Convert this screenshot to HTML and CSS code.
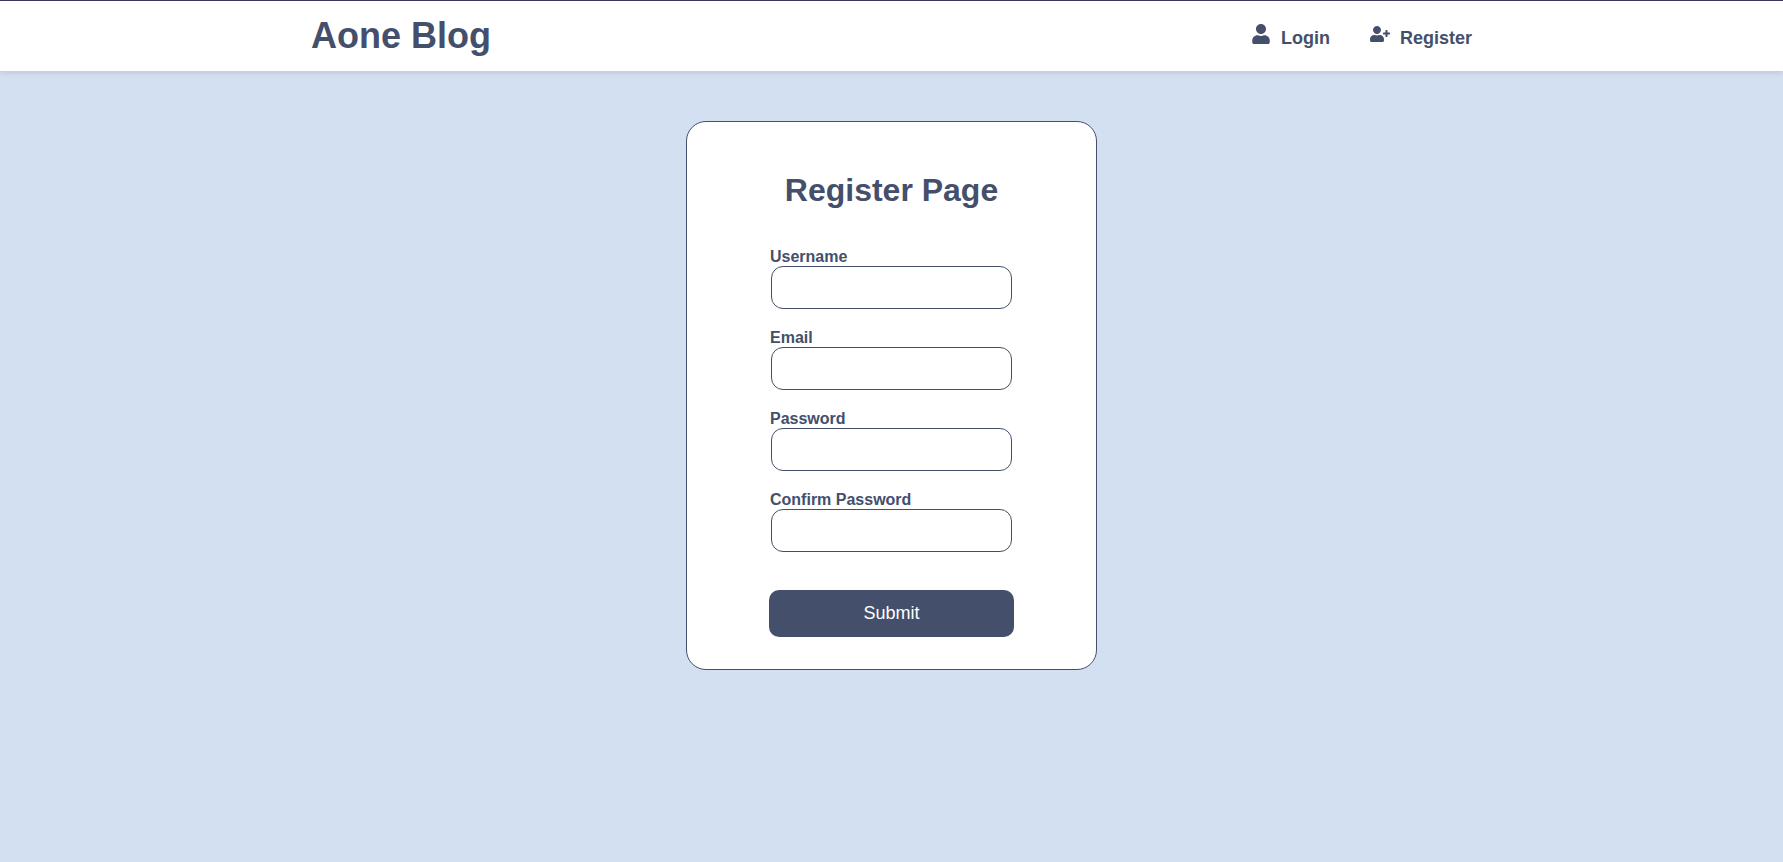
FILE: index.html
```html
<!DOCTYPE html>
<html lang="en">
<head>
  <meta charset="utf-8">
  <meta name="viewport" content="width=device-width, initial-scale=1">
  <title>Aone Blog</title>
  <link rel="stylesheet" href="styles.css">
</head>
<body>
  <header class="header">
    <div class="header-inner">
      <a class="logo" href="#">Aone Blog</a>
      <nav class="nav">
        <a class="nav-link" href="#">
          <svg class="nav-icon" viewBox="0 0 448 512" aria-hidden="true"><path fill="currentColor" d="M224 256c70.7 0 128-57.3 128-128S294.7 0 224 0 96 57.3 96 128s57.3 128 128 128zm89.6 32h-16.7c-22.2 10.2-46.9 16-72.9 16s-50.6-5.8-72.9-16h-16.7C60.2 288 0 348.2 0 422.4V464c0 26.5 21.5 48 48 48h352c26.5 0 48-21.5 48-48v-41.6c0-74.2-60.2-134.4-134.4-134.4z"/></svg>
          <span>Login</span>
        </a>
        <a class="nav-link" href="#">
          <svg class="nav-icon" viewBox="0 0 640 512" aria-hidden="true"><path fill="currentColor" d="M624 208h-64v-64c0-8.8-7.2-16-16-16h-32c-8.8 0-16 7.2-16 16v64h-64c-8.8 0-16 7.2-16 16v32c0 8.8 7.2 16 16 16h64v64c0 8.8 7.2 16 16 16h32c8.8 0 16-7.2 16-16v-64h64c8.8 0 16-7.2 16-16v-32c0-8.8-7.2-16-16-16zm-400 48c70.7 0 128-57.3 128-128S294.7 0 224 0 96 57.3 96 128s57.3 128 128 128zm89.6 32h-16.7c-22.2 10.2-46.9 16-72.9 16s-50.6-5.8-72.9-16h-16.7C60.2 288 0 348.2 0 422.4V464c0 26.5 21.5 48 48 48h352c26.5 0 48-21.5 48-48v-41.6c0-74.2-60.2-134.4-134.4-134.4z"/></svg>
          <span>Register</span>
        </a>
      </nav>
    </div>
  </header>
  <main class="main">
    <form class="card">
      <h1 class="card-title">Register Page</h1>
      <div class="fields">
        <div class="field">
          <label class="label" for="username">Username</label>
          <input class="input" id="username" name="username" type="text">
        </div>
        <div class="field">
          <label class="label" for="email">Email</label>
          <input class="input" id="email" name="email" type="email">
        </div>
        <div class="field">
          <label class="label" for="password">Password</label>
          <input class="input" id="password" name="password" type="password">
        </div>
        <div class="field">
          <label class="label" for="confirm">Confirm Password</label>
          <input class="input" id="confirm" name="confirm" type="password">
        </div>
      </div>
      <button class="submit" type="submit">Submit</button>
    </form>
  </main>
</body>
</html>
```
FILE: styles.css
```css
:root {
  --ink: #444f6b;
  --page: #d3e0f1;
}

* {
  box-sizing: border-box;
}

body {
  margin: 0;
  background: var(--page);
  color: var(--ink);
  font-family: "Liberation Sans", Arial, sans-serif;
}

.header {
  background: #fff;
  border-top: 1px solid #3b3561;
  box-shadow: 0 2px 5px rgba(0, 0, 0, 0.1);
}

.header-inner {
  display: flex;
  align-items: center;
  justify-content: space-between;
  max-width: 1201px;
  min-height: 70px;
  margin: 0 auto;
  padding: 0 20px;
}

.logo {
  color: inherit;
  font-size: 36px;
  font-weight: bold;
  text-decoration: none;
}

.nav {
  display: flex;
  gap: 40px;
}

.nav-link {
  display: flex;
  align-items: baseline;
  gap: 10px;
  color: inherit;
  font-size: 18px;
  font-weight: bold;
  text-decoration: none;
}

.nav-icon {
  width: 20px;
  height: 20px;
}

.main {
  display: flex;
  justify-content: center;
  padding: 50px 20px;
}

.card {
  display: flex;
  flex-direction: column;
  width: 100%;
  max-width: 411px;
  padding: 50px 82px 32px;
  background: #fff;
  border: 1px solid var(--ink);
  border-radius: 20px;
}

.card-title {
  margin: 0 0 40px;
  font-size: 32px;
  line-height: 36px;
  text-align: center;
}

.fields {
  display: flex;
  flex-direction: column;
  gap: 20px;
}

.field {
  display: flex;
  flex-direction: column;
}

.label {
  padding-left: 1px;
  font-size: 16px;
  font-weight: bold;
  line-height: 18px;
}

.input {
  height: 43px;
  margin: 0 2px;
  padding: 0 12px;
  background: #fff;
  border: 1px solid var(--ink);
  border-radius: 12px;
  color: inherit;
  font: inherit;
}

.submit {
  margin-top: 38px;
  padding: 13px;
  background: var(--ink);
  border: 0;
  border-radius: 10px;
  color: #fff;
  font-family: inherit;
  font-size: 18px;
  line-height: 21px;
  cursor: pointer;
}
```
